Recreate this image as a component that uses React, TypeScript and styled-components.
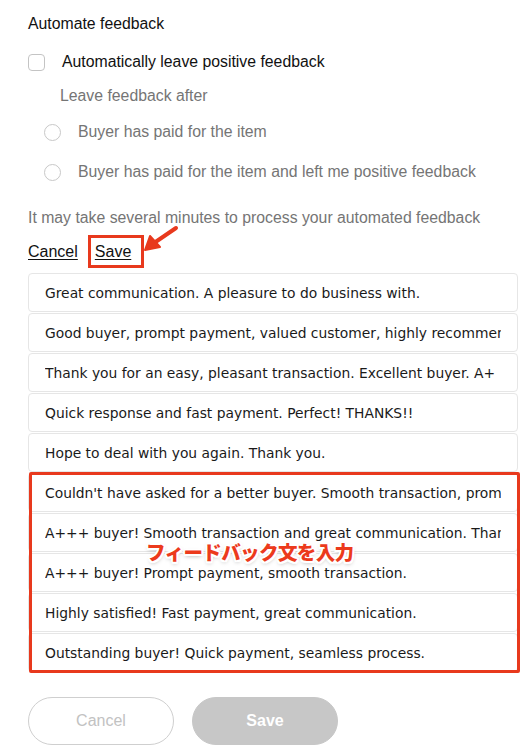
import React from "react";
import styled, { createGlobalStyle } from "styled-components";

const Global = createGlobalStyle`
  html, body { margin: 0; padding: 0; background: #fff; }
  body { font-family: "Liberation Sans", Arial, sans-serif; }
`;

const Page = styled.div`
  position: relative;
  width: 529px;
  height: 754px;
  padding: 0 10px 0 28px;
  box-sizing: border-box;
  display: flex;
  flex-direction: column;
  overflow: hidden;
`;

const Line = styled.div<{ $mt: number; $indent?: number; $muted?: boolean }>`
  margin-top: ${(p) => p.$mt}px;
  margin-left: ${(p) => p.$indent ?? 0}px;
  height: 20px;
  line-height: 20px;
  font-size: 15.8px;
  color: ${(p) => (p.$muted ? "#757575" : "#111")};
  display: flex;
  align-items: center;
  white-space: nowrap;
`;

const CheckBox = styled.span`
  width: 17px;
  height: 17px;
  box-sizing: border-box;
  border: 1px solid #c4c4c4;
  border-radius: 4px;
  margin-right: 17px;
  flex: none;
`;

const Radio = styled.span`
  width: 17px;
  height: 17px;
  box-sizing: border-box;
  border: 1px solid #c8c8c8;
  border-radius: 50%;
  margin-right: 17px;
  flex: none;
`;

const LinkRow = styled.div`
  margin-top: 14px;
  height: 20px;
  display: flex;
  gap: 17px;
  align-items: center;
`;

const TextLink = styled.a`
  font-size: 16px;
  color: #111;
  text-decoration: underline;
  text-underline-offset: 2px;
  line-height: 20px;
`;

const List = styled.div`
  position: relative;
  margin-top: 11px;
  width: 490px;
  display: flex;
  flex-direction: column;
  gap: 1px;
`;

const Entry = styled.input`
  display: block;
  width: 100%;
  height: 39px;
  box-sizing: border-box;
  border: 1px solid #e6e6e6;
  border-radius: 4px;
  padding: 0 16px;
  font-family: "DejaVu Sans", Verdana, sans-serif;
  font-size: 13.85px;
  color: #1a1a1a;
  background: #fff;
  outline: none;
`;

const Highlight = styled.div`
  position: absolute;
  left: 1px;
  top: 199px;
  width: 491px;
  height: 201px;
  box-sizing: border-box;
  border: 3px solid #e8391d;
  border-radius: 2px;
  pointer-events: none;
`;

const SaveHighlight = styled.div`
  position: absolute;
  left: 88px;
  top: 235px;
  width: 56px;
  height: 33px;
  box-sizing: border-box;
  border: 3px solid #e8391d;
  pointer-events: none;
`;

const ArrowSvg = styled.svg`
  position: absolute;
  left: 140px;
  top: 222px;
  pointer-events: none;
`;

const Label = styled.div`
  position: absolute;
  left: 118px;
  top: 264px;
  font-family: "Noto Sans CJK JP", sans-serif;
  font-weight: 900;
  font-size: 19.5px;
  letter-spacing: -0.6px;
  color: #ec3a1c;
  white-space: nowrap;
  text-shadow:
    2px 0 0 #fff, -2px 0 0 #fff, 0 2px 0 #fff, 0 -2px 0 #fff,
    1.5px 1.5px 0 #fff, -1.5px 1.5px 0 #fff, 1.5px -1.5px 0 #fff, -1.5px -1.5px 0 #fff,
    0 2px 4px rgba(0, 0, 0, 0.35);
  pointer-events: none;
`;

const Buttons = styled.div`
  margin-top: 25px;
  display: flex;
  gap: 18px;
`;

const Pill = styled.button<{ $primary?: boolean }>`
  width: 146px;
  height: 48px;
  border-radius: 24px;
  box-sizing: border-box;
  font-family: "Liberation Sans", Arial, sans-serif;
  font-size: 16px;
  font-weight: ${(p) => (p.$primary ? 700 : 400)};
  color: ${(p) => (p.$primary ? "#fff" : "#c2c2c2")};
  background: ${(p) => (p.$primary ? "#c7c7c7" : "#fff")};
  border: 1px solid ${(p) => (p.$primary ? "#c7c7c7" : "#cfcfcf")};
  cursor: default;
`;

const messages = [
  "Great communication. A pleasure to do business with.",
  "Good buyer, prompt payment, valued customer, highly recommended.",
  "Thank you for an easy, pleasant transaction. Excellent buyer. A+",
  "Quick response and fast payment. Perfect! THANKS!!",
  "Hope to deal with you again. Thank you.",
  "Couldn't have asked for a better buyer. Smooth transaction, prompt payment.",
  "A+++ buyer! Smooth transaction and great communication. Thank you!",
  "A+++ buyer! Prompt payment, smooth transaction.",
  "Highly satisfied! Fast payment, great communication.",
  "Outstanding buyer! Quick payment, seamless process.",
];

export default function App() {
  return (
    <>
      <Global />
      <Page>
        <Line $mt={14}>Automate feedback</Line>
        <Line $mt={18}>
          <CheckBox />
          Automatically leave positive feedback
        </Line>
        <Line $mt={14} $indent={32} $muted>
          Leave feedback after
        </Line>
        <Line $mt={16} $indent={16} $muted>
          <Radio />
          Buyer has paid for the item
        </Line>
        <Line $mt={20} $indent={16} $muted>
          <Radio />
          Buyer has paid for the item and left me positive feedback
        </Line>
        <Line $mt={26} $muted>
          It may take several minutes to process your automated feedback
        </Line>
        <LinkRow>
          <TextLink>Cancel</TextLink>
          <TextLink>Save</TextLink>
        </LinkRow>
        <List>
          {messages.map((m, i) => (
            <Entry key={i} readOnly defaultValue={m} />
          ))}
          <Highlight />
          <Label>フィードバック文を入力</Label>
        </List>
        <Buttons>
          <Pill>Cancel</Pill>
          <Pill $primary>Save</Pill>
        </Buttons>
        <SaveHighlight />
        <ArrowSvg width="40" height="36" viewBox="0 0 40 36">
          <path d="M36 6 L14 21" stroke="#e8391d" strokeWidth="4" strokeLinecap="round" />
          <path d="M5 28 L10 14 L20 25 Z" fill="#e8391d" stroke="#e8391d" strokeWidth="2" strokeLinejoin="round" />
        </ArrowSvg>
      </Page>
    </>
  );
}
